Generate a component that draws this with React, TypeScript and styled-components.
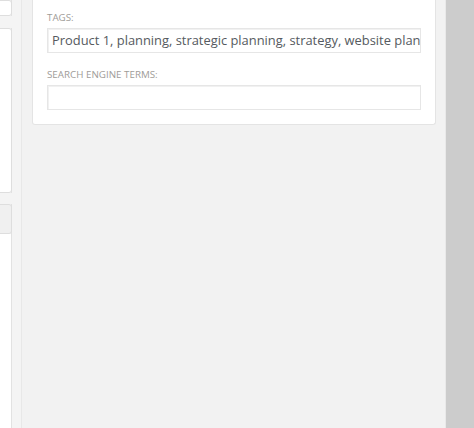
import React from 'react';
import styled, { createGlobalStyle } from 'styled-components';

const GlobalStyle = createGlobalStyle`
  html, body {
    margin: 0;
    padding: 0;
    height: 100%;
    overflow: hidden;
    background: #f2f2f2;
    font-family: "Open Sans", Lato, sans-serif;
  }
`;

const Page = styled.div`
  display: flex;
  height: 428px;
  width: 474px;
`;

const LeftColumn = styled.div`
  width: 12px;
  flex-shrink: 0;
  display: flex;
  flex-direction: column;
  background: #fff;
  border-right: 1px solid #e2e2e2;
  box-sizing: border-box;
`;

const SidePanel = styled.div<{ $height: number; $grey?: boolean }>`
  height: ${(p) => p.$height}px;
  background: ${(p) => (p.$grey ? '#f0f0f0' : '#fff')};
  border: 1px solid #dedede;
  border-left: none;
  border-radius: 0 3px 3px 0;
  margin-right: -1px;
  box-sizing: border-box;
`;

const Gap = styled.div<{ $height: number }>`
  height: ${(p) => p.$height}px;
  background: #f4f4f4;
  margin-right: -1px;
`;

const Filler = styled.div`
  flex: 1;
  background: #fff;
`;

const Strip = styled.div`
  width: 9px;
  flex-shrink: 0;
  background: #f4f4f4;
  border-right: 1px solid #e8e8e8;
`;

const Main = styled.div`
  width: 424px;
  flex-shrink: 0;
  padding-left: 10px;
  box-sizing: border-box;
  background: #f2f2f2;
  border-right: 1px solid #e9e9e9;
`;

const Card = styled.div`
  width: 404px;
  box-sizing: border-box;
  background: #fff;
  border: 1px solid #e4e4e4;
  border-top: none;
  border-radius: 0 0 3px 3px;
  padding: 12px 14px 14px 14px;
`;

const Label = styled.div<{ $spaced?: boolean }>`
  font-size: 9.8px;
  text-transform: uppercase;
  color: #a09c98;
  line-height: 12px;
  margin-top: ${(p) => (p.$spaced ? 16 : 0)}px;
  margin-bottom: 4px;
`;

const Field = styled.div`
  height: 25px;
  box-sizing: border-box;
  border: 1px solid #e6e6e6;
  box-shadow: inset 1px 1px 0 #f1f1f1;
  padding: 0 4px;
  font-size: 12.9px;
  line-height: 23px;
  color: #555a60;
  white-space: nowrap;
  overflow: hidden;
`;

const Sidebar = styled.div`
  flex: 1;
  background: #cccccc;
`;

const App: React.FC = () => {
  return (
    <>
      <GlobalStyle />
      <Page>
        <LeftColumn>
          <SidePanel $height={16} />
          <Gap $height={12} />
          <SidePanel $height={165} />
          <Gap $height={11} />
          <SidePanel $height={30} $grey />
          <Filler />
        </LeftColumn>
        <Strip />
        <Main>
          <Card>
            <Label>Tags:</Label>
            <Field>Product 1, planning, strategic planning, strategy, website plan</Field>
            <Label $spaced>Search engine terms:</Label>
            <Field />
          </Card>
        </Main>
        <Sidebar />
      </Page>
    </>
  );
};

export default App;
